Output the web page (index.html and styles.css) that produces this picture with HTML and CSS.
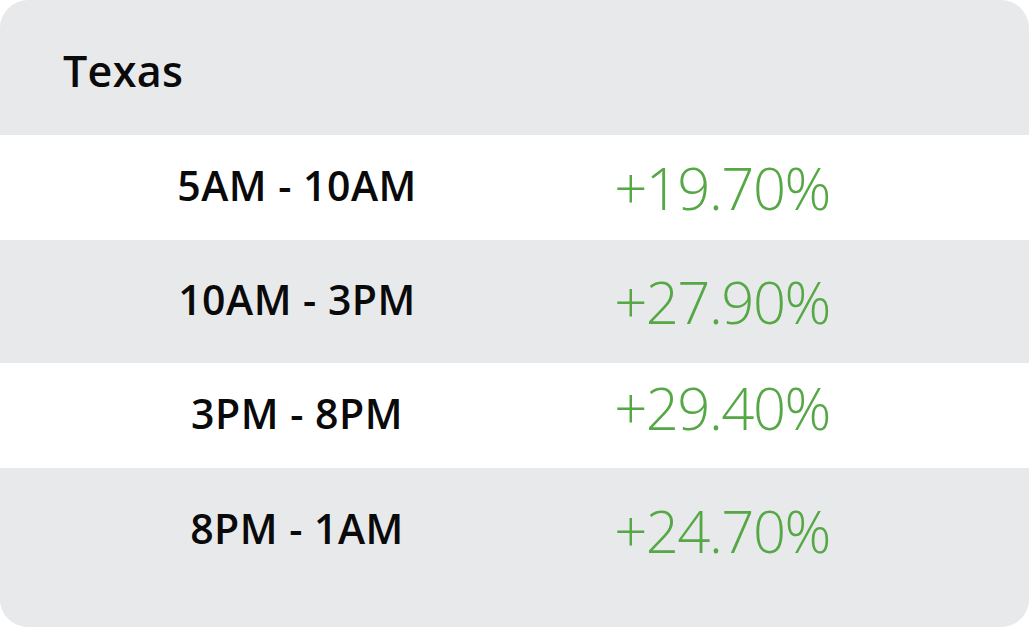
FILE: index.html
```html
<!DOCTYPE html>
<html>
<head>
<meta charset="utf-8">
<link rel="stylesheet" href="styles.css">
</head>
<body>
<div class="card">
  <div class="head">Texas</div>
  <div class="row r1">
    <div class="label">5AM - 10AM</div>
    <div class="value">+19.70%</div>
  </div>
  <div class="row r2 alt">
    <div class="label">10AM - 3PM</div>
    <div class="value">+27.90%</div>
  </div>
  <div class="row r3">
    <div class="label">3PM - 8PM</div>
    <div class="value up">+29.40%</div>
  </div>
  <div class="row r4 alt">
    <div class="label">8PM - 1AM</div>
    <div class="value">+24.70%</div>
  </div>
</div>
</body>
</html>
```
FILE: styles.css
```css
html, body {
  margin: 0;
  padding: 0;
  background: #ffffff;
}
body {
  font-family: "Open Sans", "Noto Sans", sans-serif;
  color: #0a0a0a;
}
.card {
  width: 1029px;
  height: 627px;
  background: #e8e9eb;
  border-radius: 28px;
  overflow: hidden;
  display: flex;
  flex-direction: column;
}
.head {
  height: 135px;
  box-sizing: border-box;
  padding-left: 63px;
  padding-top: 6px;
  display: flex;
  align-items: center;
  font-size: 43px;
  font-weight: 600;
  letter-spacing: 0.3px;
}
.row {
  display: grid;
  grid-template-columns: 594px 256px;
  align-items: center;
  background: #ffffff;
}
.row.alt {
  background: #e8e9eb;
}
.r1 { height: 105px; }
.r2 { height: 123px; }
.r3 { height: 105px; }
.r4 { height: 159px; box-sizing: border-box; padding-bottom: 35px; }
.label {
  text-align: center;
  font-size: 41px;
  font-weight: 650;
  letter-spacing: 0.5px;
  margin-bottom: 5px;
}
.value {
  text-align: center;
  font-size: 58px;
  font-weight: 350;
  color: #55a845;
  letter-spacing: -1.5px;
}
.value.up {
  margin-bottom: 16px;
}
```
